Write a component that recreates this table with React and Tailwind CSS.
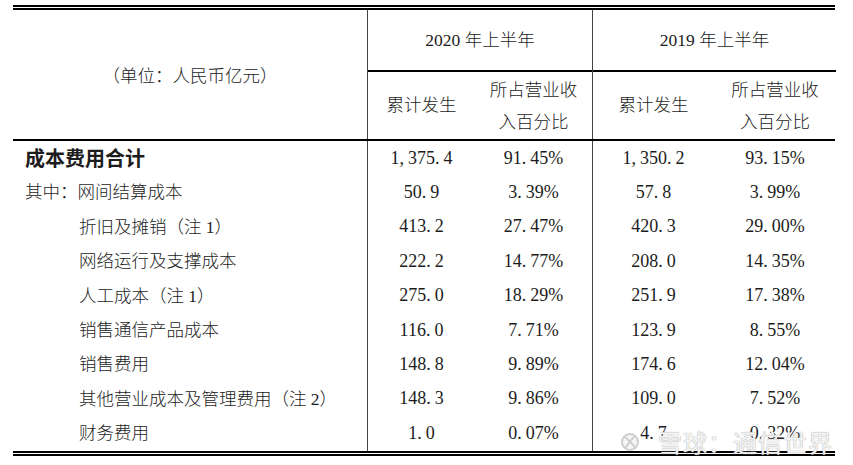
import React from "react";

const rows = [
  { label: "成本费用合计", a: "1,375.4", b: "91.45%", c: "1,350.2", d: "93.15%", bold: true },
  { label: "其中：网间结算成本", a: "50.9", b: "3.39%", c: "57.8", d: "3.99%" },
  { label: "折旧及摊销（注 1）", a: "413.2", b: "27.47%", c: "420.3", d: "29.00%", sub: true },
  { label: "网络运行及支撑成本", a: "222.2", b: "14.77%", c: "208.0", d: "14.35%", sub: true },
  { label: "人工成本（注 1）", a: "275.0", b: "18.29%", c: "251.9", d: "17.38%", sub: true },
  { label: "销售通信产品成本", a: "116.0", b: "7.71%", c: "123.9", d: "8.55%", sub: true },
  { label: "销售费用", a: "148.8", b: "9.89%", c: "174.6", d: "12.04%", sub: true },
  { label: "其他营业成本及管理费用（注 2）", a: "148.3", b: "9.86%", c: "109.0", d: "7.52%", sub: true },
  { label: "财务费用", a: "1.0", b: "0.07%", c: "4.7", d: "0.32%", sub: true },
];

// SimSun style: half-width punctuation takes a full digit slot
function Num({ v }) {
  return (
    <span className="font-['Liberation_Serif'] text-[18px]">
      {v.split("").map((ch, i) =>
        ch == "." || ch == "," ? (
          <span key={i} className="mr-[4px]">{ch}</span>
        ) : (
          <span key={i}>{ch}</span>
        )
      )}
    </span>
  );
}

function Logo() {
  return (
    <svg width="20" height="18" viewBox="0 0 20 18" fill="none">
      <circle cx="10" cy="9" r="8" stroke="#cfcfcf" strokeWidth="2" fill="#f6f6f6" />
      <path d="M5 4 C9 7 12 11 15 14" stroke="#cfcfcf" strokeWidth="2" strokeLinecap="round" />
      <path d="M14 4 C10 8 8 11 6 14" stroke="#cfcfcf" strokeWidth="2" strokeLinecap="round" />
    </svg>
  );
}

export default function App() {
  const cell = "flex items-center justify-center";
  return (
    <div className="w-[853px] h-[465px] bg-white relative overflow-hidden text-[#1c1c1c] font-['Liberation_Serif','Noto_Sans_CJK_SC',serif] text-[17.5px] font-light">
      <div className="ml-[13px] pt-[5px] w-[822px]">
        <div className="h-[2px] bg-black" />
        <div className="h-[2px] bg-black mt-[1px]" />

        {/* header */}
        <div className="grid grid-cols-[355px_107px_118px_121px_122px] grid-rows-[60px_2px_67px]">
          <div className={`${cell} row-span-3 border-r border-[#444] pt-[4px]`}>（单位：人民币亿元）</div>
          <div className={`${cell} col-span-2 border-r border-[#444]`}>2020 年上半年</div>
          <div className={`${cell} col-span-2`}>2019 年上半年</div>
          <div className="col-span-2 bg-black border-r border-[#444]" />
          <div className="col-span-2 bg-black" />
          <div className={`${cell}`}>累计发生</div>
          <div className={`${cell} flex-col leading-[32px] border-r border-[#444]`}>
            <span>所占营业收</span>
            <span>入百分比</span>
          </div>
          <div className={`${cell}`}>累计发生</div>
          <div className={`${cell} flex-col leading-[32px]`}>
            <span>所占营业收</span>
            <span>入百分比</span>
          </div>
        </div>
        <div className="h-[2px] bg-black" />

        {/* body */}
        <div className="flex flex-col">
          {rows.map((r) => (
            <div key={r.label} className="grid grid-cols-[355px_107px_118px_121px_122px] h-[34.4px]">
              <div
                className={`flex items-center border-r border-[#444] ${r.sub ? "pl-[66px]" : "pl-[12px]"} ${r.bold ? "font-['Noto_Sans_CJK_SC'] font-bold text-[20px]" : ""}`}
              >
                {r.label}
              </div>
              <div className={cell}><Num v={r.a} /></div>
              <div className={`${cell} border-r border-[#444]`}><Num v={r.b} /></div>
              <div className={cell}><Num v={r.c} /></div>
              <div className={cell}><Num v={r.d} /></div>
            </div>
          ))}
        </div>

        <div className="h-[2px] bg-black" />
        <div className="h-[2px] bg-black mt-[1px]" />
      </div>

      {/* watermark */}
      <div className="absolute left-[620px] top-[424px] flex items-center gap-[18px]">
        <Logo />
        <span className="font-['Noto_Sans_CJK_SC'] font-normal text-[24px] tracking-[1px] text-[#f4f4f4] [text-shadow:0_0_1px_#b0b0b0,0_0_1px_#b0b0b0]">
          雪球：通信世界
        </span>
      </div>
    </div>
  );
}
